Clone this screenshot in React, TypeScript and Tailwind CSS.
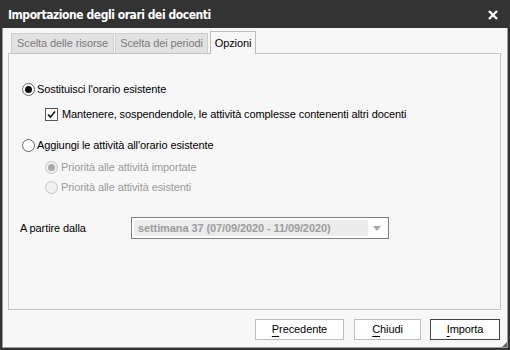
import React from "react";

function Radio({ checked, disabled }: { checked?: boolean; disabled?: boolean }) {
  return (
    <span
      className={`flex h-[13px] w-[13px] items-center justify-center rounded-full border ${
        disabled ? "border-[#c4c4c4] bg-[#f0f0f0]" : "border-[#666] bg-white"
      }`}
    >
      {checked && (
        <span className={`h-[7px] w-[7px] rounded-full ${disabled ? "bg-[#a8a8a8]" : "bg-[#111]"}`} />
      )}
    </span>
  );
}

function Btn({ first, rest, def }: { first: string; rest: string; def?: boolean }) {
  return (
    <button
      className={`flex w-full h-[21px] items-center justify-center bg-white text-black border ${
        def ? "border-[#444]" : "border-[#bdbdbd]"
      }`}
    >
      <span>
        <span className="underline underline-offset-[3px]">{first}</span>
        {rest}
      </span>
    </button>
  );
}

export default function App() {
  return (
    <div
      className="h-[350px] w-[510px] border-2 border-[#333] bg-[#f7f7f7] flex flex-col text-[11px] tracking-[-0.1px]"
      style={{ fontFamily: '"Liberation Sans", Arial, sans-serif' }}
    >
      <div className="h-[26px] bg-[#333333] flex items-center justify-between pl-[6px] pr-[8px] shrink-0">
        <span
          className="text-white font-bold text-[12px] tracking-[-0.45px]"
          style={{ fontFamily: '"DejaVu Sans Condensed", "DejaVu Sans", sans-serif' }}
        >
          Importazione degli orari dei docenti
        </span>
        <svg width="10" height="10" viewBox="0 0 10 10" className="mr-[2px]">
          <path d="M1 1 L9 9 M9 1 L1 9" stroke="white" strokeWidth="2.4" />
        </svg>
      </div>
      <div className="flex-1 flex flex-col border-l border-r border-b border-[#9a9a9a] relative">
        <div className="flex items-end pl-[8px] pt-[3px] h-[25px] whitespace-nowrap">
          <div className="h-[20px] w-[103px] bg-[#e2e2e2] border border-b-0 border-[#cfcfcf] flex items-center justify-center text-[#7a7a7a]">
            Scelta delle risorse
          </div>
          <div className="h-[20px] w-[93px] ml-[1px] bg-[#e2e2e2] border border-b-0 border-[#cfcfcf] flex items-center justify-center text-[#7a7a7a]">
            Scelta dei periodi
          </div>
          <div className="h-[23px] w-[46px] ml-[2px] bg-[#f7f7f7] border border-b-0 border-[#bdbdbd] flex items-center justify-center text-black relative top-[1px]">
            Opzioni
          </div>
        </div>
        <div className="ml-[5px] mr-[6px] h-[257px] border border-[#c4c4c4] text-black flex flex-col pl-[13px] pt-[27px]">
          <div className="flex items-center h-[16px]">
            <span className="mr-[2px]"><Radio checked /></span>
            <span>Sostituisci l'orario esistente</span>
          </div>
          <div className="flex items-center h-[16px] mt-[9px] pl-[23px]">
            <span className="flex h-[13px] w-[13px] items-center justify-center border border-[#555] bg-white mr-[4px]">
              <svg width="11" height="11" viewBox="0 0 11 11">
                <path d="M2 5.5 L4.5 8 L9 2.5" stroke="#111" strokeWidth="1.6" fill="none" />
              </svg>
            </span>
            <span>Mantenere, sospendendole, le attività complesse contenenti altri docenti</span>
          </div>
          <div className="flex items-center h-[16px] mt-[15px]">
            <span className="mr-[2px]"><Radio /></span>
            <span>Aggiungi le attività all'orario esistente</span>
          </div>
          <div className="flex items-center h-[16px] mt-[6px] pl-[23px] text-[#9a9a9a]">
            <span className="mr-[3px]"><Radio checked disabled /></span>
            <span>Priorità alle attività importate</span>
          </div>
          <div className="flex items-center h-[16px] mt-[4px] pl-[23px] text-[#9a9a9a]">
            <span className="mr-[3px]"><Radio disabled /></span>
            <span>Priorità alle attività esistenti</span>
          </div>
          <div className="flex items-center mt-[22px] -ml-[2px]">
            <span className="w-[111px]">A partire dalla</span>
            <div className="h-[22px] w-[258px] border border-[#7f7f7f] bg-white flex items-center p-[2px]">
              <div className="flex-1 h-full bg-[#ececec] flex items-center pl-[4px] font-bold text-[#9c9c9c]">
                settimana 37 (07/09/2020 - 11/09/2020)
              </div>
              <div className="w-[18px] flex items-center justify-center">
                <svg width="8" height="5" viewBox="0 0 8 5">
                  <path d="M0 0 L8 0 L4 5 Z" fill="#a8a8a8" />
                </svg>
              </div>
            </div>
          </div>
        </div>
        <div className="flex justify-end mr-[7px] mt-[9px] gap-[10px]">
          <div className="w-[89px]"><Btn first="P" rest="recedente" /></div>
          <div className="w-[67px]"><Btn first="C" rest="hiudi" /></div>
          <div className="w-[70px] -ml-[1px]"><Btn first="I" rest="mporta" def /></div>
        </div>
        <svg width="5" height="5" viewBox="0 0 5 5" className="absolute right-0 bottom-0">
          <path d="M5 0 L5 5 L0 5 Z" fill="#666" />
        </svg>
      </div>
    </div>
  );
}
